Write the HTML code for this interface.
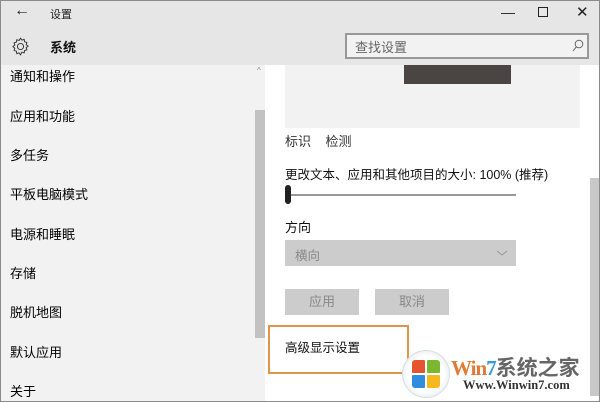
<!DOCTYPE html>
<html><head><meta charset="utf-8"><style>
*{margin:0;padding:0;box-sizing:border-box}
body{width:600px;height:402px;overflow:hidden;font-family:"Liberation Sans","Noto Sans CJK SC",sans-serif;background:#fff;position:relative;color:#000}
.a{position:absolute}
.nav{font-size:13px;left:10px}
</style></head><body>
<div class="a" style="left:0;top:0;width:600px;height:402px;border:1px solid #8a8a8a"></div>
<div class="a" style="left:1px;top:1px;width:598px;height:64px;background:#e6e6e6"></div>
<div class="a" style="left:14px;top:2px;font-size:16px;color:#222">←</div>
<div class="a" style="left:50px;top:6px;font-size:11px;color:#222">设置</div>
<div class="a" style="left:501px;top:4px;font-size:14px;color:#222">—</div>
<div class="a" style="left:538px;top:7px;width:10px;height:10px;border:1px solid #222"></div>
<div class="a" style="left:576px;top:3px;font-size:15px;color:#222">✕</div>
<svg class="a" style="left:10px;top:36px" width="21" height="21" viewBox="0 0 24 24"><path d="M12 2.5l1.6 2.2 2.6-.8.5 2.7 2.6.8-.8 2.6 2.2 1.6-2.2 1.6.8 2.6-2.6.8-.5 2.7-2.6-.8L12 21.5l-1.6-2.2-2.6.8-.5-2.7-2.6-.8.8-2.6L3.3 12l2.2-1.6-.8-2.6 2.6-.8.5-2.7 2.6.8z" fill="none" stroke="#333" stroke-width="1.1"/><circle cx="12" cy="12" r="3.5" fill="none" stroke="#333" stroke-width="1.1"/></svg>
<div class="a" style="left:50px;top:37px;font-size:13px;font-weight:bold;color:#111">系统</div>
<div class="a" style="left:345px;top:33px;width:244px;height:26px;border:2px solid #999;background:#f2f2f2"></div>
<div class="a" style="left:355px;top:37px;font-size:13px;color:#666">查找设置</div>
<svg class="a" style="left:572px;top:39px" width="12" height="14" viewBox="0 0 12 14"><circle cx="7" cy="5" r="3.8" fill="none" stroke="#666"/><path d="M4.3 7.8L1 12" stroke="#666"/></svg>
<div class="a" style="left:1px;top:65px;width:264px;height:336px;background:#f2f2f2"></div>
<div class="a" style="left:255px;top:110px;width:10px;height:228px;background:#c2c2c2"></div>
<div class="a" style="left:257px;top:66px;font-size:8px;color:#888">^</div>
<div class="a nav" style="top:66px">通知和操作</div>
<div class="a nav" style="top:106px">应用和功能</div>
<div class="a nav" style="top:145px">多任务</div>
<div class="a nav" style="top:184px">平板电脑模式</div>
<div class="a nav" style="top:224px">电源和睡眠</div>
<div class="a nav" style="top:263px">存储</div>
<div class="a nav" style="top:302px">脱机地图</div>
<div class="a nav" style="top:342px">默认应用</div>
<div class="a nav" style="top:381px">关于</div>
<div class="a" style="left:285px;top:65px;width:295px;height:63px;background:#f2f2f2"></div>
<div class="a" style="left:404px;top:65px;width:107px;height:19px;background:#4a4542"></div>
<div class="a" style="left:590px;top:178px;width:9px;height:218px;background:#c8c8c8"></div>
<div class="a" style="left:285px;top:131px;font-size:13px;color:#333">标识&nbsp;&nbsp;&nbsp;&nbsp;检测</div>
<div class="a" style="left:285px;top:164px;font-size:12.5px;color:#111">更改文本、应用和其他项目的大小: 100% (推荐)</div>
<div class="a" style="left:285px;top:194px;width:231px;height:2px;background:#999"></div>
<div class="a" style="left:285px;top:185px;width:6px;height:19px;border-radius:3px;background:#222"></div>
<div class="a" style="left:285px;top:217px;font-size:13px;color:#111">方向</div>
<div class="a" style="left:285px;top:240px;width:231px;height:26px;background:#ccc"></div>
<div class="a" style="left:295px;top:245px;font-size:12.5px;color:#888">横向</div>
<svg class="a" style="left:496px;top:249px" width="12" height="8" viewBox="0 0 12 8"><path d="M1 2l5 4 5-4" fill="none" stroke="#999"/></svg>
<div class="a" style="left:285px;top:289px;width:74px;height:26px;background:#ccc;color:#888;font-size:13px;text-align:center;line-height:26px">应用</div>
<div class="a" style="left:375px;top:289px;width:74px;height:26px;background:#ccc;color:#888;font-size:13px;text-align:center;line-height:26px">取消</div>
<div class="a" style="left:268px;top:325px;width:141px;height:49px;border:2px solid #e0954a"></div>
<div class="a" style="left:285px;top:337px;font-size:12.5px;color:#111">高级显示设置</div>
<div class="a" style="left:402px;top:350px;width:48px;height:48px;border-radius:50%;background:radial-gradient(circle,#fff 55%,#cfd9e3);border:1px solid #d8dee4"></div>
<div class="a" style="left:412px;top:360px;width:13px;height:13px;background:#e5542e;border-radius:3px 1px 1px 1px"></div>
<div class="a" style="left:427px;top:360px;width:13px;height:13px;background:#7cb82f;border-radius:1px 3px 1px 1px"></div>
<div class="a" style="left:412px;top:375px;width:13px;height:13px;background:#2f8ee0;border-radius:1px 1px 1px 3px"></div>
<div class="a" style="left:427px;top:375px;width:13px;height:13px;background:#f6b81f;border-radius:1px 1px 3px 1px"></div>
<div class="a" style="left:451px;top:352px;font-size:21px;font-weight:bold;font-family:'Liberation Serif','Noto Serif CJK SC',serif;color:#e07a35;letter-spacing:-1px">Win<span style="color:#3a9ad9">7</span><span style="color:#666;font-family:'Noto Sans CJK SC',sans-serif;letter-spacing:0">系统之家</span></div>
<div class="a" style="left:463px;top:378px;font-size:12.5px;font-weight:bold;font-family:'Liberation Serif',serif;color:#333">Www.Winwin7.com</div>
</body></html>
